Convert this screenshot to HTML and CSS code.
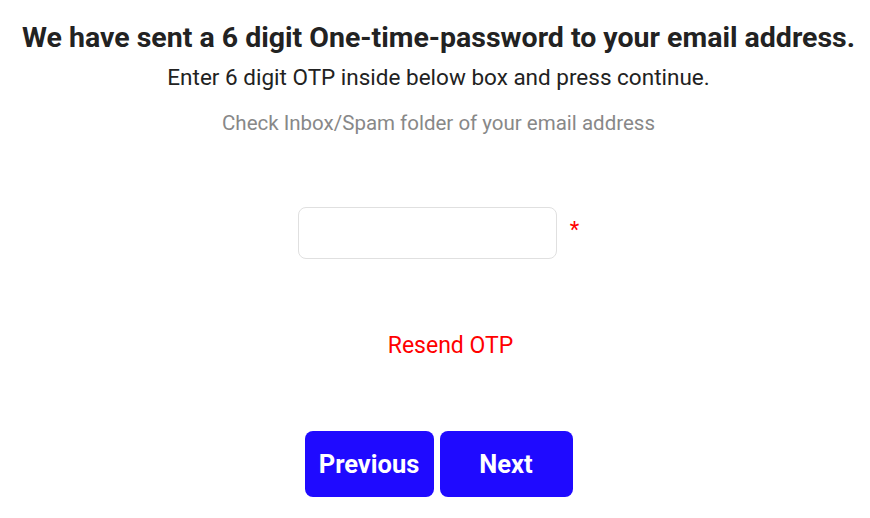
FILE: index.html
```html
<!DOCTYPE html>
<html>
<head>
<meta charset="utf-8">
<link rel="stylesheet" href="styles.css">
</head>
<body>
<main class="otp">
  <h1 class="title">We have sent a 6 digit One-time-password to your email address.</h1>
  <p class="subtitle">Enter 6 digit OTP inside below box and press continue.</p>
  <p class="hint">Check Inbox/Spam folder of your email address</p>
  <div class="field-row">
    <input class="otp-input" type="text">
    <span class="required">*</span>
  </div>
  <a class="resend" href="#">Resend OTP</a>
  <div class="actions">
    <button class="btn btn-prev">Previous</button>
    <button class="btn btn-next">Next</button>
  </div>
</main>
</body>
</html>
```
FILE: styles.css
```css
html, body {
  margin: 0;
  padding: 0;
  background: #fff;
}
body {
  font-family: Roboto, "Liberation Sans", sans-serif;
  color: #222;
}
.otp {
  display: flex;
  flex-direction: column;
  align-items: center;
  text-align: center;
  padding-top: 20px;
  padding-left: 7px;
}
.title {
  margin: 0;
  font-size: 28.5px;
  font-weight: 700;
  line-height: 36px;
  color: #222;
  white-space: nowrap;
}
.subtitle {
  margin: 6px 0 0;
  font-size: 22.5px;
  line-height: 30px;
  color: #222;
}
.hint {
  margin: 16px 0 0;
  font-size: 20.5px;
  line-height: 30px;
  color: #888;
}
.field-row {
  display: flex;
  align-items: center;
  margin-top: 69px;
}
.otp-input {
  width: 259px;
  height: 52px;
  box-sizing: border-box;
  border: 1px solid #e0e0e0;
  border-radius: 8px;
  outline: none;
  padding: 0 12px;
  font-size: 18px;
}
.required {
  color: #f00;
  font-size: 22px;
  margin-left: 13px;
  line-height: 22px;
  margin-top: -6px;
}
.resend {
  margin-top: 72px;
  margin-left: 24px;
  font-size: 23px;
  line-height: 30px;
  color: #f00;
  text-decoration: none;
}
.actions {
  display: flex;
  gap: 6px;
  margin-top: 70px;
}
.btn {
  height: 66px;
  border: none;
  border-radius: 8px;
  background: #1f0aff;
  color: #fff;
  font-family: Roboto, "Liberation Sans", sans-serif;
  font-size: 25.5px;
  font-weight: 700;
  cursor: pointer;
  padding: 0;
}
.btn-prev {
  width: 129px;
}
.btn-next {
  width: 133px;
}
```
